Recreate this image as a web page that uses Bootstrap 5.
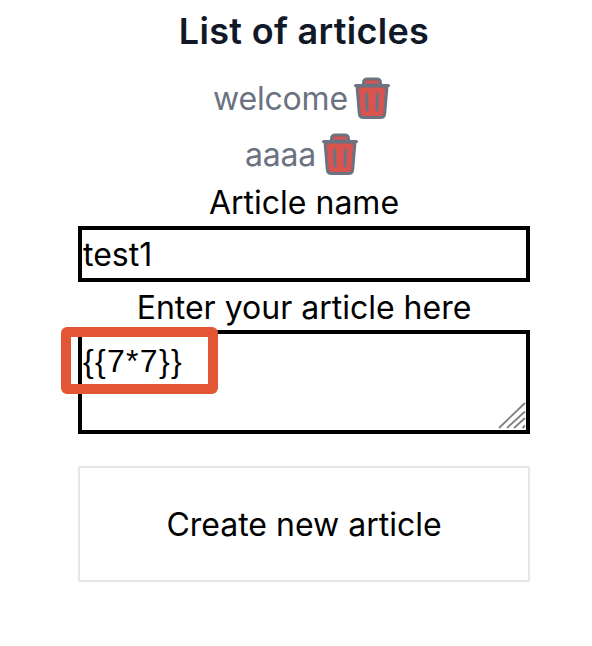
<!DOCTYPE html>
<html lang="en">
<head>
<meta charset="utf-8">
<title>List of articles</title>
<link href="https://cdn.jsdelivr.net/npm/bootstrap@5.3.0/dist/css/bootstrap.min.css" rel="stylesheet">
<style>
body { background:#fff; font-family:"Inter","Liberation Sans",sans-serif; color:#000; height:646px; overflow:hidden; }
.page-col { width:452px; margin-left:78px; padding-top:11px; position:relative; }
.page-title { font-size:36px; line-height:40px; font-weight:600; color:#111827; margin:0 0 19px; letter-spacing:.3px; }
.art-row { font-size:32px; line-height:40px; color:#6b7280; height:56px; padding-right:5px; column-gap:6px; letter-spacing:-.2px; }
.art-name { padding-top:2px; }
.trash { width:36px; height:42px; flex:none; }
.field-label { font-size:32px; line-height:40px; margin:0; }
.label-one { height:44px; padding-top:1px; }
.label-two { height:48px; padding-top:6px; }
.field-box { display:block; width:100%; border:4px solid #000; border-radius:0; background:#fff; color:#000; font-size:32px; line-height:40px; padding:4px 0 4px 1px; outline:0; font-family:inherit; }
.field-one { height:56px; }
.field-two { height:104px; resize:none; font-family:"Liberation Sans",sans-serif; letter-spacing:1.3px; padding-top:7px; }
.area-wrap { position:relative; }
.grip { position:absolute; right:4px; bottom:4px; width:30px; height:30px; pointer-events:none; }
.create-btn { display:block; width:100%; height:116px; margin-top:32px; padding-top:8px; border:2px solid #e5e7eb; border-radius:0; background:#fff; color:#000; font-size:32px; line-height:40px; }
.mark-box { position:absolute; left:-17px; top:327px; width:157px; height:67px; border:10px solid #e25636; border-radius:6px; pointer-events:none; }
</style>
</head>
<body>
<div class="page-col">
  <h1 class="page-title text-center">List of articles</h1>
  <div>
    <div class="art-row d-flex justify-content-center align-items-center">
      <span class="art-name">welcome</span>
      <svg class="trash" viewBox="0 0 36 42" aria-hidden="true"><path d="M9.500 8V6q0-4 4-4h9q4 0 4 4v2z" fill="#d9534f" stroke="#6b7280" stroke-width="3"/><path d="M3 9l2.300 27.500q.4 4 4 4h17.400q3.600 0 4-4L33 9z" fill="#d9534f" stroke="#6b7280" stroke-width="3" stroke-linejoin="round"/><path d="M1.500 8.500h33" stroke="#6b7280" stroke-width="3" stroke-linecap="round"/><path d="M12.500 17l.5 16M23.500 17l-.5 16" stroke="#6b7280" stroke-width="3" stroke-linecap="round"/></svg>
    </div>
    <div class="art-row d-flex justify-content-center align-items-center">
      <span class="art-name">aaaa</span>
      <svg class="trash" viewBox="0 0 36 42" aria-hidden="true"><path d="M9.500 8V6q0-4 4-4h9q4 0 4 4v2z" fill="#d9534f" stroke="#6b7280" stroke-width="3"/><path d="M3 9l2.300 27.500q.4 4 4 4h17.400q3.600 0 4-4L33 9z" fill="#d9534f" stroke="#6b7280" stroke-width="3" stroke-linejoin="round"/><path d="M1.500 8.500h33" stroke="#6b7280" stroke-width="3" stroke-linecap="round"/><path d="M12.500 17l.5 16M23.500 17l-.5 16" stroke="#6b7280" stroke-width="3" stroke-linecap="round"/></svg>
    </div>
  </div>
  <form>
    <label class="field-label label-one d-block text-center" for="nm">Article name</label>
    <input id="nm" class="field-box field-one" type="text" value="test1">
    <label class="field-label label-two d-block text-center" for="tx">Enter your article here</label>
    <div class="area-wrap">
      <textarea id="tx" class="field-box field-two">{{7*7}}</textarea>
      <svg class="grip" viewBox="0 0 30 30" aria-hidden="true"><path d="M3 28L29 3M11 28L29 11.500M18 28l11-10M26.500 28l2.500-2.500" stroke="#808080" stroke-width="1.800" fill="none"/></svg>
    </div>
    <button type="button" class="btn create-btn">Create new article</button>
  </form>
  <div class="mark-box"></div>
</div>
</body>
</html>
